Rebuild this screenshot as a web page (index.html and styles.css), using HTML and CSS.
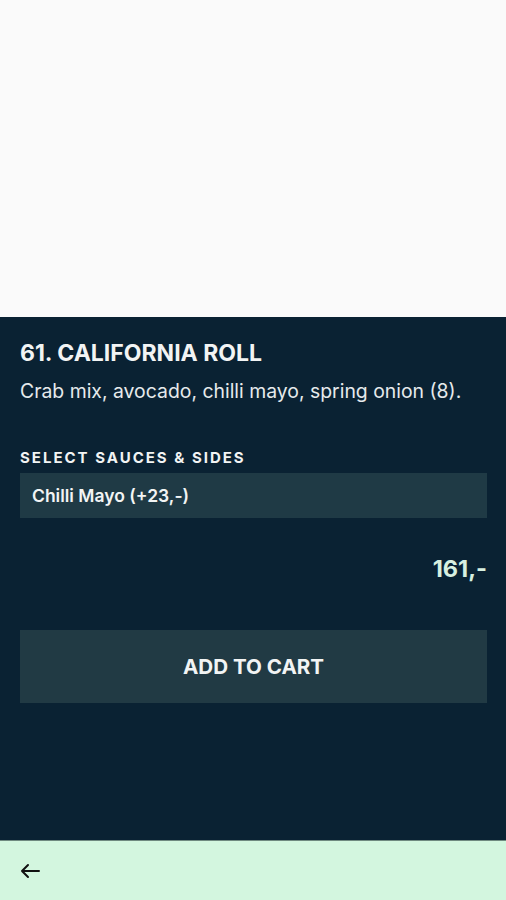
FILE: index.html
```html
<html lang="en">
<head>
    <meta charset="UTF-8">
    <meta name="viewport" content="width=device-width, initial-scale=1.0">
    <title>California Roll</title>
    <link rel="stylesheet" href="styles.css">
</head>
<body>
    <div class="page">
        <div class="top"></div>

        <div class="panel">
            <h1 class="title">61. CALIFORNIA ROLL</h1>
            <p class="desc">Crab mix, avocado, chilli mayo, spring onion (8).</p>

            <div class="label">SELECT SAUCES &amp; SIDES</div>
            <div class="select">Chilli Mayo (+23,-)</div>

            <div class="price">161,-</div>

            <button class="cart" type="button">ADD TO CART</button>
        </div>

        <div class="footer">
            <svg class="back" width="20" height="16" viewBox="0 0 20 16">
                <path d="M19 8H2M8 2L2 8l6 6" fill="none" stroke="#111" stroke-width="2" stroke-linecap="round" stroke-linejoin="round"/>
            </svg>
        </div>
    </div>
</body>
</html>
```

FILE: styles.css
```css
body {
    margin: 0;
    font-family: Inter, 'Liberation Sans', Arial, sans-serif;
    background: #fafafa;
}

.page {
    display: flex;
    flex-direction: column;
    height: 900px;
}

.top {
    height: 317px;
    background: #fafafa;
}

.panel {
    flex: 1;
    background: #0a2233;
    color: #f2f4f4;
    padding: 23px 19px 0 20px;
    display: flex;
    flex-direction: column;
}

.title {
    margin: 0;
    font-size: 23px;
    font-weight: 700;
    line-height: 26px;
}

.desc {
    margin: 13px 0 0;
    font-size: 19.4px;
    line-height: 24px;
    color: #e6eaec;
}

.label {
    margin-top: 46px;
    font-size: 15px;
    font-weight: 700;
    letter-spacing: 2px;
    line-height: 18px;
}

.select {
    margin-top: 6px;
    height: 45px;
    background: #1f3a45;
    padding: 0 12px;
    display: flex;
    align-items: center;
    font-size: 17.5px;
    font-weight: 600;
}

.price {
    margin-top: 38px;
    text-align: right;
    font-size: 23.5px;
    font-weight: 700;
    color: #d8f0e0;
    line-height: 26px;
}

.cart {
    margin-top: 48px;
    height: 73px;
    background: #213a44;
    border: none;
    color: #f2f4f4;
    font-family: inherit;
    font-size: 20.6px;
    font-weight: 700;
    cursor: pointer;
}

.footer {
    height: 59px;
    background: #d3f6df;
    border-top: 1px solid #6f8a80;
    display: flex;
    align-items: center;
    padding-left: 20px;
}
```
